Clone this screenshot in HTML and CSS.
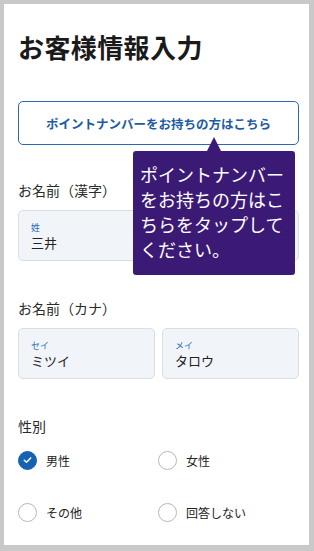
FILE: index.html
```html
<!DOCTYPE html>
<html lang="ja">
<head>
<meta charset="utf-8">
<link rel="stylesheet" href="styles.css">
</head>
<body>
<div class="screen">
  <h1 class="title">お客様情報入力</h1>
  <button class="point-btn">ポイントナンバーをお持ちの方はこちら</button>

  <div class="section-label first">お名前（漢字）</div>
  <div class="field-row">
    <div class="field"><span class="field-label">姓</span><span class="field-value">三井</span></div>
    <div class="field"></div>
  </div>

  <div class="section-label">お名前（カナ）</div>
  <div class="field-row">
    <div class="field"><span class="field-label">セイ</span><span class="field-value">ミツイ</span></div>
    <div class="field"><span class="field-label">メイ</span><span class="field-value">タロウ</span></div>
  </div>

  <div class="section-label">性別</div>
  <div class="radio-grid">
    <div class="radio-item"><span class="radio checked"><svg viewBox="0 0 18 18" width="18" height="18"><path d="M5.6 9.2 L7.9 11.4 L12.4 6.8" fill="none" stroke="#fff" stroke-width="1.6" stroke-linecap="round" stroke-linejoin="round"/></svg></span><span class="radio-text">男性</span></div>
    <div class="radio-item"><span class="radio"></span><span class="radio-text">女性</span></div>
    <div class="radio-item"><span class="radio"></span><span class="radio-text">その他</span></div>
    <div class="radio-item"><span class="radio"></span><span class="radio-text">回答しない</span></div>
  </div>

  <div class="tooltip">ポイントナンバー<br>をお持ちの方はこ<br>ちらをタップして<br>ください。</div>
</div>
</body>
</html>
```

FILE: styles.css
```css
* { box-sizing: border-box; }
html, body { margin: 0; padding: 0; }
body {
  background: #c9c9c9;
  font-family: "Noto Sans CJK JP", "Noto Sans", sans-serif;
  width: 314px;
  height: 551px;
  padding: 4px 5px 6px 4px;
}
.screen {
  position: relative;
  background: #fff;
  height: 541px;
  padding: 25px 10px 0 14px;
  color: #222;
}
.title {
  margin: 0;
  font-size: 26px;
  line-height: 36px;
  font-weight: 700;
  color: #1a1a1a;
  letter-spacing: 0.4px;
}
.point-btn {
  display: block;
  width: 281px;
  height: 44px;
  margin-top: 36px;
  border: 1.5px solid #2a68b0;
  border-radius: 5px;
  background: #fff;
  color: #1d5ba5;
  font-family: inherit;
  font-size: 12.5px;
  font-weight: 700;
  padding: 0;
}
.section-label {
  font-size: 14px;
  line-height: 20px;
  margin-top: 37px;
  color: #2a2a2a;
}
.section-label.first { margin-top: 35px; }
.field-row {
  display: grid;
  grid-template-columns: 137px 137px;
  gap: 7px;
  margin-top: 10px;
}
.field {
  height: 51px;
  background: #f1f5fa;
  border: 1px solid #d9dee4;
  border-radius: 5px;
  padding: 11px 0 0 12px;
  display: flex;
  flex-direction: column;
}
.field-label {
  font-size: 9px;
  line-height: 12px;
  color: #2a6cb5;
}
.field-value {
  font-size: 13px;
  line-height: 18px;
  color: #222;
}
.radio-grid {
  display: grid;
  grid-template-columns: 140px 140px;
  grid-auto-rows: 52px;
  margin-top: -2px;
}
.radio-item {
  display: flex;
  align-items: center;
}
.radio {
  width: 19px;
  height: 19px;
  border-radius: 50%;
  border: 1px solid #b8b8b8;
  background: #fff;
  display: flex;
  align-items: center;
  justify-content: center;
  flex: none;
}
.radio.checked {
  background: #1561b2;
  border-color: #1561b2;
}
.radio-text {
  margin-left: 9px;
  font-size: 12px;
  color: #222;
}
.tooltip {
  position: absolute;
  left: 129px;
  top: 147px;
  width: 162px;
  height: 124px;
  background: #3b1a76;
  border-radius: 3px;
  color: #fff;
  font-size: 18px;
  line-height: 25px;
  padding: 11px 0 0 7px;
  white-space: nowrap;
}
.tooltip::before {
  content: "";
  position: absolute;
  left: 74px;
  top: -14px;
  border-left: 7px solid transparent;
  border-right: 7px solid transparent;
  border-bottom: 14px solid #3b1a76;
}
```
